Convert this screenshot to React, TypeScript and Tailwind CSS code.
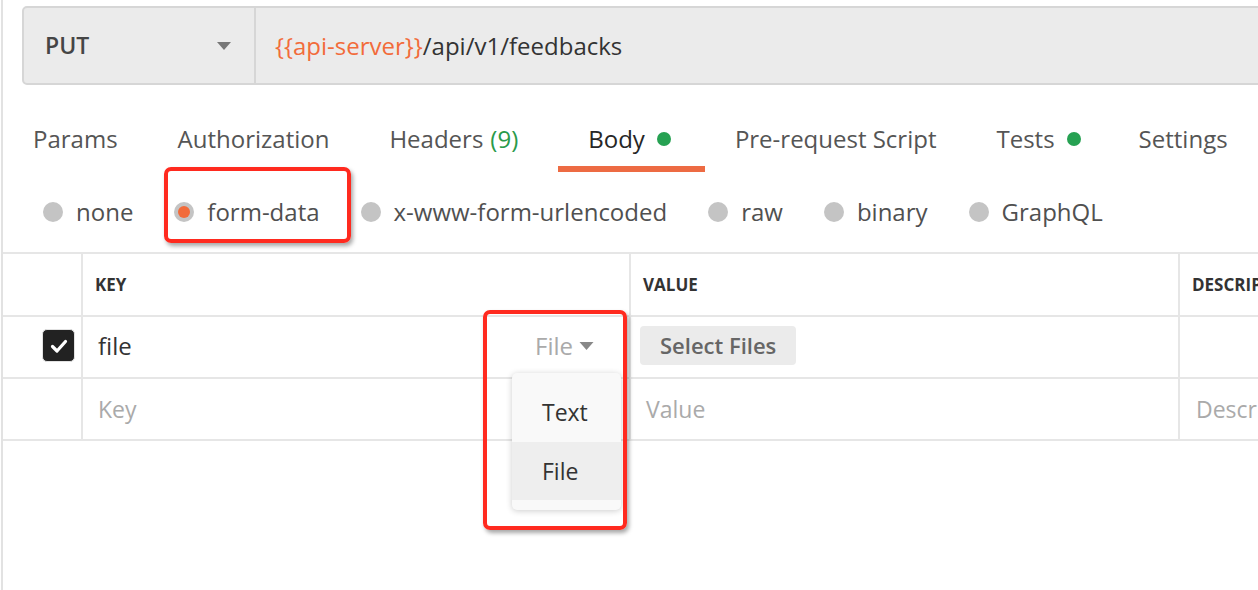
const tabs = [
  { label: "Params" },
  { label: "Authorization" },
  { label: "Headers", count: "(9)" },
  { label: "Body", dot: true, active: true },
  { label: "Pre-request Script" },
  { label: "Tests", dot: true },
  { label: "Settings" },
];

const bodyTypes = ["none", "form-data", "x-www-form-urlencoded", "raw", "binary", "GraphQL"];

function Caret({ className }: { className: string }) {
  return (
    <svg viewBox="0 0 14 8" className={className} aria-hidden="true">
      <path d="M0 0 H14 L7 8 Z" fill="currentColor" />
    </svg>
  );
}

function Radio({ label }: { label: string }) {
  const selected = label === "form-data";

  return (
    <div className="relative flex items-center gap-[13px]">
      <span className="flex h-[20px] w-[20px] items-center justify-center rounded-full bg-[#c4c4c4]">
        {selected && <span className="h-[12px] w-[12px] rounded-full bg-[#f26b3a]" />}
      </span>
      <span className="text-[24px] leading-none text-[#505050]">{label}</span>
      {selected && (
        <div className="pointer-events-none absolute -top-[33px] -bottom-[19px] -left-[10px] -right-[31px] rounded-[7px] border-4 border-[#ff2a1f] shadow-[2px_3px_4px_rgba(0,0,0,0.35)]" />
      )}
    </div>
  );
}

function tabPadding(label: string) {
  if (label === "Headers") return "pr-[40px]";
  if (label === "Body") return "pr-[34px]";
  if (label === "Tests") return "pr-[28px]";
  return "pr-[30px]";
}

export default function App() {
  return (
    <div
      className="ml-px min-h-[590px] overflow-hidden border-l-2 border-[#e2e2e2] bg-white"
      style={{ fontFamily: '"Open Sans", "Liberation Sans", sans-serif' }}
    >
      {/* request bar */}
      <div className="ml-[19px] mt-[6px] flex h-[79px] w-[1300px] rounded-l-[5px] border-2 border-[#d6d6d6] bg-[#ebebeb]">
        <div className="flex w-[230px] shrink-0 items-center justify-between pl-[21px] pr-[23px]">
          <span className="text-[23px] font-semibold text-[#454545]">PUT</span>
          <Caret className="h-[8px] w-[14px] text-[#777]" />
        </div>
        <div className="flex flex-1 items-center border-l-2 border-[#d6d6d6] pl-[19px] text-[24px] text-[#333]">
          <span className="text-[#f26b3a]">{"{{api-server}}"}</span>
          <span>/api/v1/feedbacks</span>
        </div>
      </div>

      {/* tabs */}
      <div className="mt-[26px] flex">
        {tabs.map((tab) => (
          <div
            key={tab.label}
            className={`flex h-[61px] shrink-0 items-center gap-[12px] border-b-[6px] pl-[30px] text-[24px] ${
              tab.active ? "border-[#ed6b43] text-[#262626]" : "border-transparent text-[#555]"
            } ${tabPadding(tab.label)}`}
          >
            <span>
              {tab.label}
              {tab.count && <span className="ml-[7px] text-[#2a9a4a]">{tab.count}</span>}
            </span>
            {tab.dot && <span className="h-[14px] w-[14px] rounded-full bg-[#26a152]" />}
          </div>
        ))}
      </div>

      {/* body types */}
      <div className="flex h-[80px] items-center gap-[41px] pl-[40px]">
        {bodyTypes.map((type) => (
          <Radio key={type} label={type} />
        ))}
      </div>

      {/* form-data table */}
      <div className="border-t-2 border-[#e6e6e6]">
        <div className="flex h-[63px] border-b-2 border-[#e6e6e6] text-[17px] font-bold text-[#333]">
          <div className="w-[80px] shrink-0 border-r-2 border-[#e6e6e6]" />
          <div className="flex w-[548px] shrink-0 items-center border-r-2 border-[#e6e6e6] pl-[12px]">KEY</div>
          <div className="flex w-[549px] shrink-0 items-center border-r-2 border-[#e6e6e6] pl-[12px]">VALUE</div>
          <div className="flex shrink-0 items-center whitespace-nowrap pl-[12px]">DESCRIPTION</div>
        </div>

        <div className="flex h-[62px] border-b-2 border-[#e6e6e6] text-[24px]">
          <div className="flex w-[80px] shrink-0 items-center justify-end border-r-2 border-[#e6e6e6] pr-[6px]">
            <span className="-mt-[3px] flex h-[33px] w-[33px] items-center justify-center rounded-[5px] border border-[#e2e2e2] bg-[#222]">
              <svg viewBox="0 0 20 20" className="h-[20px] w-[20px]" aria-hidden="true">
                <path d="M3.5 10.5 L8 15 L16.5 5.5" fill="none" stroke="white" strokeWidth="3.2" strokeLinecap="round" strokeLinejoin="round" />
              </svg>
            </span>
          </div>
          <div className="relative flex w-[548px] shrink-0 items-center justify-between border-r-2 border-[#e6e6e6] pl-[15px] pr-[35px]">
            <span className="-mt-[3px] text-[#333]">file</span>
            <span className="-mt-[3px] flex items-center gap-[6px] text-[24px] text-[#aaa]">
              File
              <Caret className="h-[8px] w-[15px] text-[#888]" />
            </span>

            {/* type menu */}
            <div className="absolute left-[429px] top-[56px] z-10 w-[109px] rounded-[5px] bg-[#f9f9f9] pb-[10px] shadow-[0_1px_6px_rgba(0,0,0,0.2)]">
              <div className="flex h-[69px] items-center pl-[30px] pt-[10px] text-[23px] text-[#333]">Text</div>
              <div className="flex h-[58px] items-center bg-[#eeeeee] pl-[30px] text-[23px] text-[#333]">File</div>
            </div>
            <div className="pointer-events-none absolute left-[400px] top-[-7px] z-20 h-[220px] w-[144px] rounded-[7px] border-4 border-[#ff2a1f] shadow-[2px_3px_4px_rgba(0,0,0,0.35)]" />
          </div>
          <div className="flex w-[549px] shrink-0 items-center border-r-2 border-[#e6e6e6] pl-[9px]">
            <span className="-mt-[4px] flex h-[39px] items-center rounded-[4px] bg-[#ebebeb] px-[20px] text-[22px] font-semibold text-[#666]">
              Select Files
            </span>
          </div>
          <div className="flex-1" />
        </div>

        <div className="flex h-[62px] border-b-2 border-[#e6e6e6] text-[23px] text-[#aaa]">
          <div className="w-[80px] shrink-0 border-r-2 border-[#e6e6e6]" />
          <div className="flex w-[548px] shrink-0 items-center border-r-2 border-[#e6e6e6] pl-[15px]">Key</div>
          <div className="flex w-[549px] shrink-0 items-center border-r-2 border-[#e6e6e6] pl-[15px]">Value</div>
          <div className="flex shrink-0 items-center whitespace-nowrap pl-[16px]">Description</div>
        </div>
      </div>
    </div>
  );
}
